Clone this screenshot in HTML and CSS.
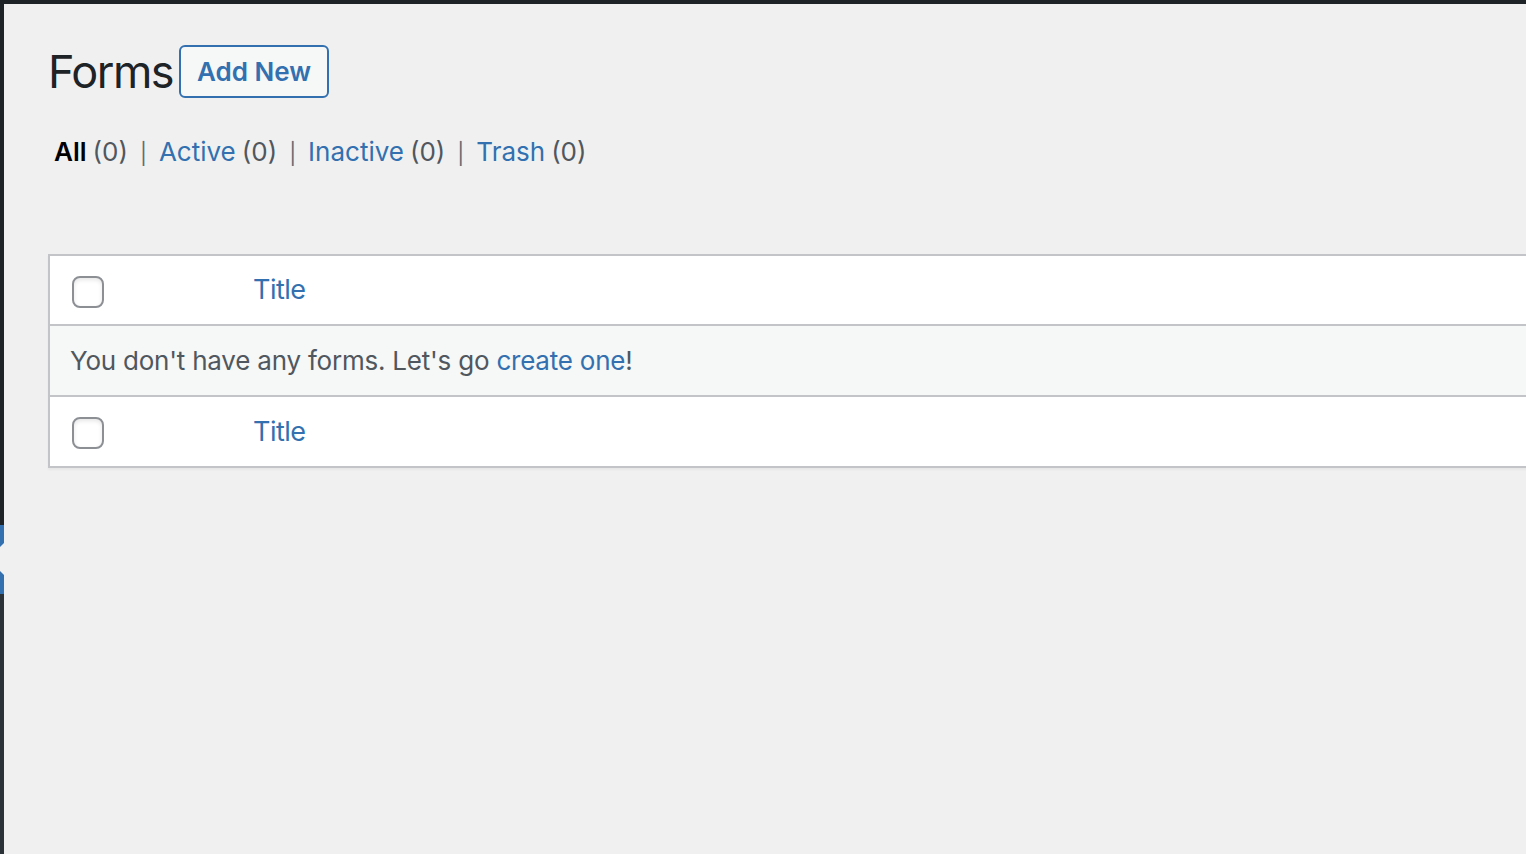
FILE: index.html
```html
<!DOCTYPE html>
<html lang="en">
<head>
<meta charset="utf-8">
<title>Forms</title>
<link rel="stylesheet" href="styles.css">
</head>
<body>
<div class="adminbar"></div>
<div class="layout">
  <nav class="adminmenu">
    <div class="menu-top"></div>
    <div class="menu-current">
      <svg width="4" height="69" viewBox="0 0 4 69" aria-hidden="true">
        <rect x="0" y="0" width="4" height="69" fill="#3270b0"/>
        <polygon points="4,18 4,50 -12,34" fill="#f0f0f1"/>
      </svg>
    </div>
    <div class="menu-sub"></div>
  </nav>
  <main class="content">
    <div class="wrap">
      <div class="page-head">
        <h1 class="page-title">Forms</h1>
        <a class="page-title-action" href="#">Add New</a>
      </div>
      <ul class="subsubsub">
        <li><a class="filter current" href="#">All</a><span class="count">(0)</span><span class="sep">|</span></li>
        <li><a class="filter" href="#">Active</a><span class="count">(0)</span><span class="sep">|</span></li>
        <li><a class="filter" href="#">Inactive</a><span class="count">(0)</span><span class="sep">|</span></li>
        <li><a class="filter" href="#">Trash</a><span class="count">(0)</span></li>
      </ul>
      <table class="widefat">
        <colgroup>
          <col class="col-check">
          <col>
        </colgroup>
        <thead>
          <tr>
            <td class="check-column"><input type="checkbox" class="cb"></td>
            <th class="column-title"><a href="#">Title</a></th>
          </tr>
        </thead>
        <tbody>
          <tr class="no-items">
            <td colspan="2">You don't have any forms. Let's go <a href="#">create one</a>!</td>
          </tr>
        </tbody>
        <tfoot>
          <tr>
            <td class="check-column"><input type="checkbox" class="cb"></td>
            <th class="column-title"><a href="#">Title</a></th>
          </tr>
        </tfoot>
      </table>
    </div>
  </main>
</div>
</body>
</html>
```
FILE: styles.css
```css
html, body {
  margin: 0;
  padding: 0;
  height: 100%;
}

body {
  background: #f0f0f1;
  color: #3c434a;
  font-family: Inter, "Noto Sans", "Liberation Sans", sans-serif;
  font-size: 26px;
  overflow: hidden;
}

a {
  color: #3270b0;
  text-decoration: none;
}

.adminbar {
  height: 4px;
  background: #1d2327;
}

.layout {
  display: flex;
  height: calc(100% - 4px);
}

/* admin menu edge */
.adminmenu {
  width: 4px;
  flex: 0 0 4px;
  display: flex;
  flex-direction: column;
}

.menu-top {
  height: 521px;
  background: #1d2327;
}

.menu-current {
  height: 69px;
  line-height: 0;
}

.menu-current svg {
  display: block;
}

.menu-sub {
  flex: 1;
  background: #2c3338;
}

.content {
  flex: 1;
  min-width: 0;
  padding-left: 44px;
  overflow: hidden;
}

.wrap {
  margin-top: 20px;
}

/* heading */
.page-head {
  display: flex;
  align-items: center;
  gap: 6px;
}

.page-title {
  margin: 0;
  padding: 18px 0 8px;
  font-size: 45px;
  font-weight: 400;
  letter-spacing: -1.5px;
  line-height: 59.8px;
  color: #1d2327;
}

.page-title-action {
  margin-top: 10px;
  padding: 9px 16px;
  border: 2px solid #3270b0;
  border-radius: 6px;
  background: #f6f7f7;
  font-size: 26px;
  font-weight: 600;
  line-height: normal;
  color: #3270b0;
}

/* status filters */
.subsubsub {
  list-style: none;
  margin: 16px 0 0;
  padding: 0 0 0 6px;
  display: flex;
  align-items: baseline;
  line-height: 52px;
  color: #646970;
}

.subsubsub li {
  display: flex;
  align-items: baseline;
  white-space: nowrap;
}

.subsubsub .count {
  margin-left: 6px;
  color: #50575e;
}

.subsubsub .current {
  color: #000;
  font-weight: 600;
}

.subsubsub .sep {
  margin: 0 12px 0 12px;
  font-size: 21px;
  color: #646970;
}

/* list table */
.widefat {
  width: 1700px;
  margin-top: 74px;
  border: 2px solid #c3c4c7;
  border-spacing: 0;
  border-collapse: separate;
  background: #fff;
  table-layout: fixed;
  box-shadow: 0 2px 2px rgba(0, 0, 0, 0.04);
}

.col-check {
  width: 187px;
}

.widefat thead td,
.widefat thead th {
  height: 68px;
  border-bottom: 2px solid #c3c4c7;
}

.widefat tfoot td,
.widefat tfoot th {
  height: 69px;
  border-top: 2px solid #c3c4c7;
}

.check-column {
  padding: 20px 0 0 22px;
  vertical-align: top;
  box-sizing: border-box;
}

.column-title {
  padding: 0 16px;
  text-align: left;
  font-size: 27px;
  font-weight: 400;
  letter-spacing: -0.5px;
  vertical-align: middle;
}

.cb {
  -webkit-appearance: none;
  appearance: none;
  display: block;
  margin: 0;
  width: 32px;
  height: 32px;
  box-sizing: border-box;
  border: 2px solid #8c8f94;
  border-radius: 8px;
  background: #fff;
  box-shadow: inset 0 2px 4px rgba(0, 0, 0, 0.1);
}

.no-items td {
  height: 69px;
  padding: 0 20px;
  background: #f6f7f7;
  color: #50575e;
  letter-spacing: -0.22px;
  vertical-align: middle;
}
```
